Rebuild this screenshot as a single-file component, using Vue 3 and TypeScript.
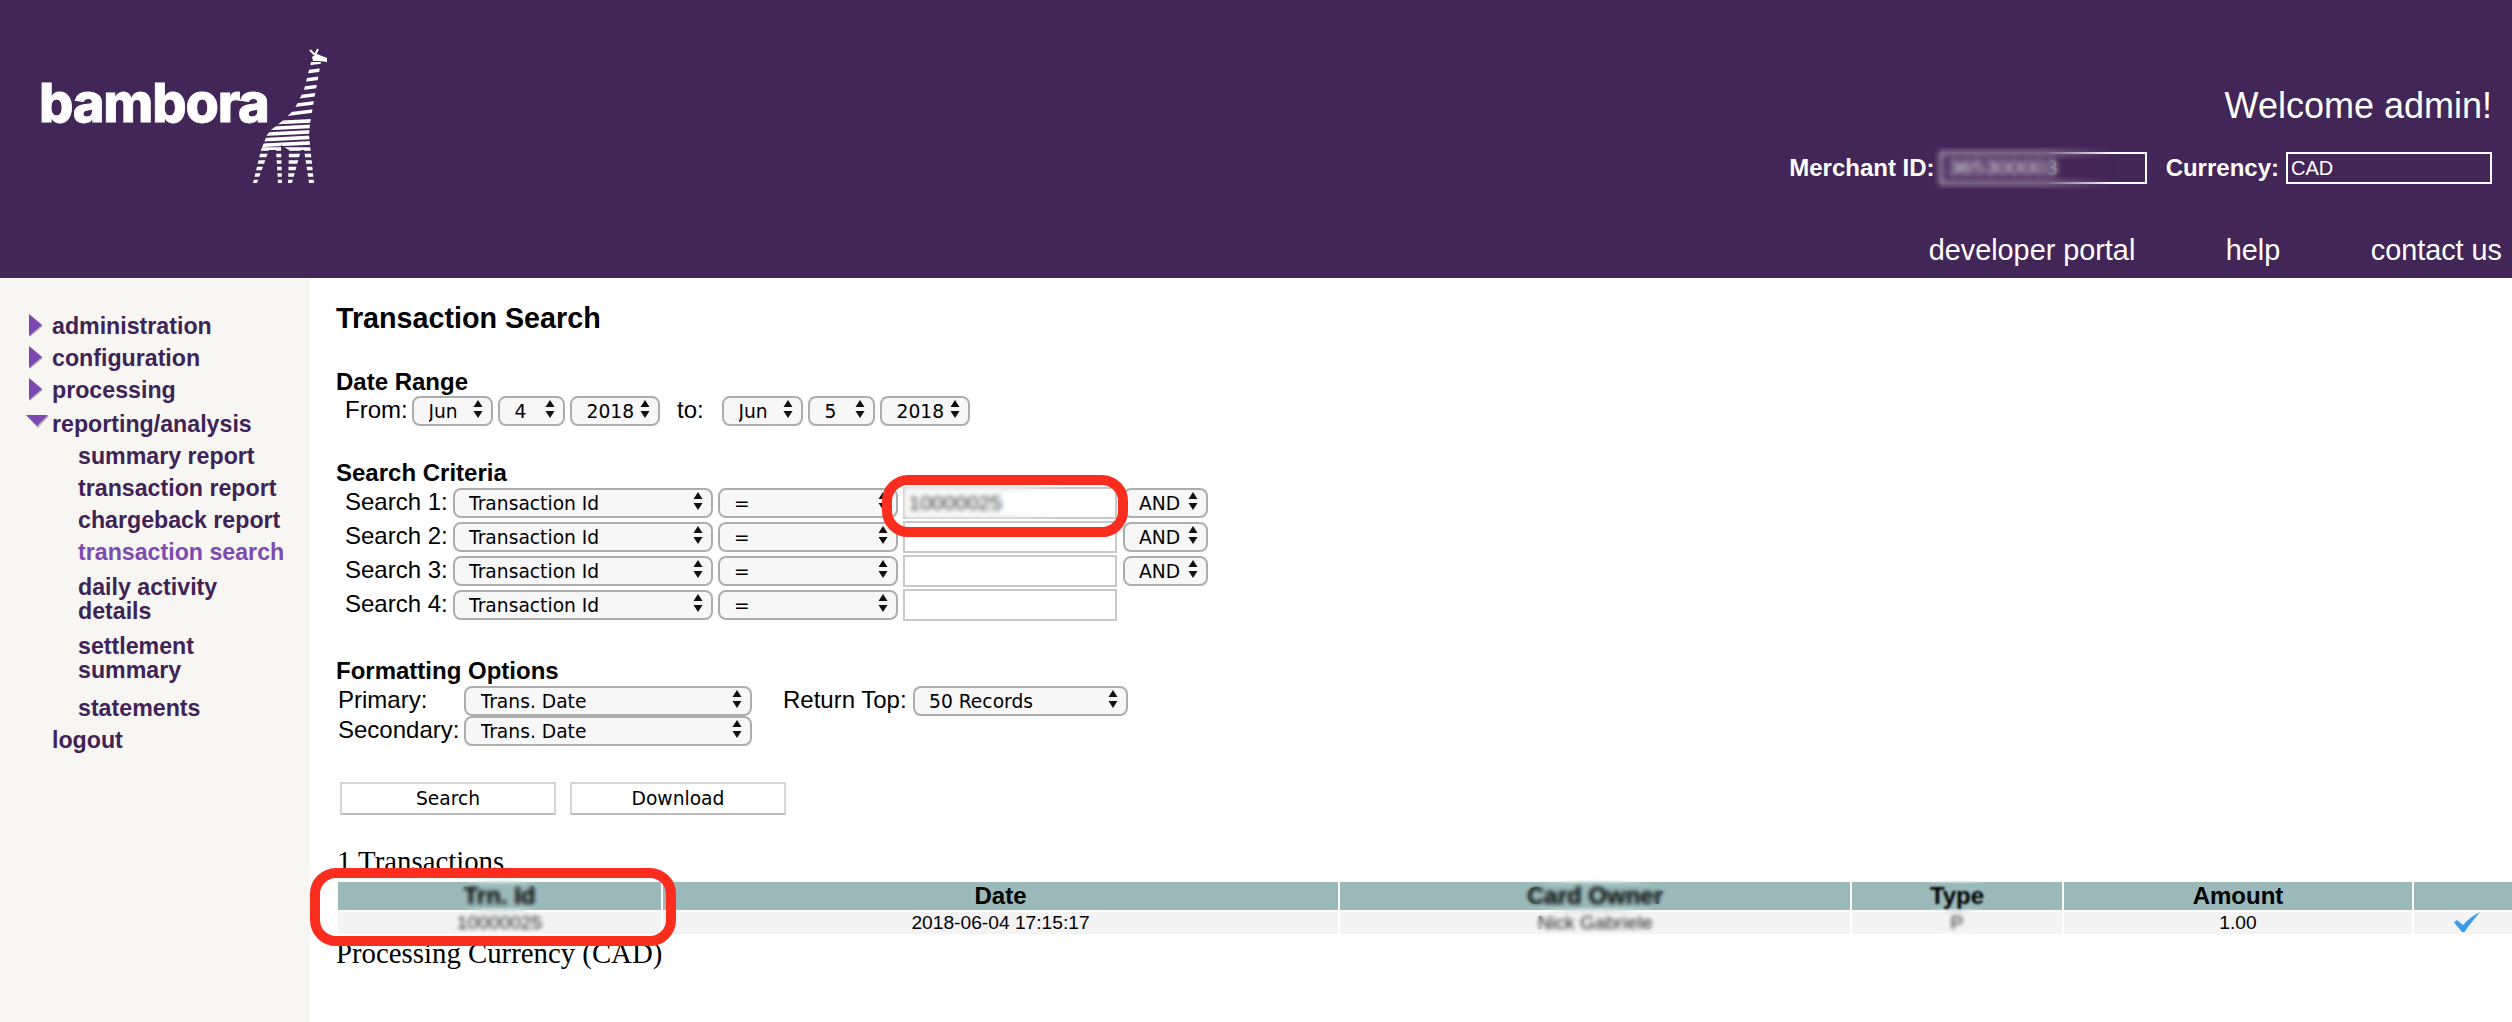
<script setup lang="ts">
interface NavItem { label: string; sub?: boolean; active?: boolean; arrow?: 'right' | 'down'; extra?: string }
const navItems: NavItem[] = [
  { label: 'administration', arrow: 'right' },
  { label: 'configuration', arrow: 'right' },
  { label: 'processing', arrow: 'right' },
  { label: 'reporting/analysis', arrow: 'down', extra: 'mt2' },
  { label: 'summary report', sub: true },
  { label: 'transaction report', sub: true },
  { label: 'chargeback report', sub: true },
  { label: 'transaction search', sub: true, active: true },
  { label: 'daily activity details', sub: true, extra: 'mt3' },
  { label: 'settlement summary', sub: true, extra: 'mt3' },
  { label: 'statements', sub: true, extra: 'mt6' },
  { label: 'logout' }
]

const dateFrom = [
  { v: 'Jun', c: 'w-mon' },
  { v: '4', c: 'w-day' },
  { v: '2018', c: 'w-yr' }
]
const dateTo = [
  { v: 'Jun', c: 'w-mon' },
  { v: '5', c: 'w-day' },
  { v: '2018', c: 'w-yr' }
]
const searches = [
  { n: 1, val: '10000025', and: true },
  { n: 2, val: '', and: true },
  { n: 3, val: '', and: true },
  { n: 4, val: '', and: false }
]

const headers = ['Trn. Id', 'Date', 'Card Owner', 'Type', 'Amount', '']

const stripes: string[] = []
for (let y = 66; y < 120; y += 8) stripes.push(`M250 ${y + 5} L330 ${y - 5}`)
for (let y = 122; y < 146; y += 5.5) stripes.push(`M250 ${y + 2} L330 ${y - 2}`)
for (let y = 149; y < 186; y += 6.5) stripes.push(`M250 ${y} L330 ${y}`)
const stripePath = stripes.join(' ')
</script>

<template>
  <div class="page">
    <header class="top">
      <div class="logo">
        <span class="logo-word">bambora</span>
        <svg class="giraffe" viewBox="250 45 80 140" width="80" height="140" aria-hidden="true">
          <defs>
            <clipPath id="gir">
              <path d="M312 62 L322 62 L315 100 L311 124 L310 135 L315 183 L310 183 L305 150 L302 150 L293 183 L289 183 L290 150 L282 145 L283 183 L279 183 L277 150 L270 150 L258 183 L254 183 L262 150 L268 135 L272 130 L282 122 L295 110 L305 90 Z" />
            </clipPath>
          </defs>
          <g clip-path="url(#gir)">
            <path :d="stripePath" stroke="#fff" stroke-width="3.6" fill="none" />
          </g>
          <path d="M313 57 L318 54 L328 58 L328 62 L320 61 L314 61 Z" fill="#fff" />
          <path d="M316 55 L311 50 M316 55 L319 49" stroke="#fff" stroke-width="2" fill="none" />
        </svg>
      </div>
      <div class="top-right">
        <div class="welcome">Welcome admin!</div>
        <div class="ids">
          <label class="id-label">Merchant ID:</label>
          <span class="id-wrap">
            <input class="id-input merchant" value="365300003" readonly />
            <span class="smudge smudge-merchant"></span>
          </span>
          <label class="id-label cur-label">Currency:</label>
          <input class="id-input currency" value="CAD" readonly />
        </div>
        <nav class="top-nav">
          <a>developer portal</a>
          <a>help</a>
          <a>contact us</a>
        </nav>
      </div>
    </header>

    <div class="body">
      <aside class="side">
        <div
          v-for="item in navItems"
          :key="item.label"
          class="nav-item"
          :class="[item.extra, { sub: item.sub, active: item.active }]"
        >
          <span v-if="!item.sub" class="nav-arrow">
            <svg v-if="item.arrow === 'right'" class="arr-r" width="16" height="24" viewBox="0 0 16 24">
              <polygon points="1,1 14,12 1,23" fill="#b9b3bd" />
              <polygon points="0,0 13,11 0,22" fill="#7d49b1" />
            </svg>
            <svg v-if="item.arrow === 'down'" class="arr-d" width="24" height="14" viewBox="0 0 24 14">
              <polygon points="1,1 23,1 12,13" fill="#b9b3bd" />
              <polygon points="0,0 22,0 11,11" fill="#7d49b1" />
            </svg>
          </span>
          <span class="nav-text">{{ item.label }}</span>
        </div>
      </aside>

      <main class="main">
        <h1 class="title">Transaction Search</h1>

        <h2 class="sec first">Date Range</h2>
        <div class="row date-row">
          <span class="lbl from-lbl">From:</span>
          <span v-for="d in dateFrom" :key="'f' + d.c" class="sel" :class="d.c">
            <select><option>{{ d.v }}</option></select>
            <svg class="updown" width="10" height="18" viewBox="0 0 10 18"><path d="M5 0 L9.5 7 L0.5 7 Z M0.5 11 L9.5 11 L5 18 Z" fill="#111" /></svg>
          </span>
          <span class="lbl to-lbl">to:</span>
          <span v-for="d in dateTo" :key="'t' + d.c" class="sel" :class="d.c">
            <select><option>{{ d.v }}</option></select>
            <svg class="updown" width="10" height="18" viewBox="0 0 10 18"><path d="M5 0 L9.5 7 L0.5 7 Z M0.5 11 L9.5 11 L5 18 Z" fill="#111" /></svg>
          </span>
        </div>

        <h2 class="sec second">Search Criteria</h2>
        <div class="search-rows">
          <div v-for="s in searches" :key="s.n" class="row search-row">
            <span class="lbl search-lbl">Search {{ s.n }}:</span>
            <span class="sel w-field">
              <select><option>Transaction Id</option></select>
              <svg class="updown" width="10" height="18" viewBox="0 0 10 18"><path d="M5 0 L9.5 7 L0.5 7 Z M0.5 11 L9.5 11 L5 18 Z" fill="#111" /></svg>
            </span>
            <span class="sel w-op">
              <select><option>=</option></select>
              <svg class="updown" width="10" height="18" viewBox="0 0 10 18"><path d="M5 0 L9.5 7 L0.5 7 Z M0.5 11 L9.5 11 L5 18 Z" fill="#111" /></svg>
            </span>
            <span class="val-wrap">
              <input class="val" :value="s.val" />
              <span v-if="s.val" class="smudge smudge-val"></span>
            </span>
            <span v-if="s.and" class="sel w-and">
              <select><option>AND</option></select>
              <svg class="updown" width="10" height="18" viewBox="0 0 10 18"><path d="M5 0 L9.5 7 L0.5 7 Z M0.5 11 L9.5 11 L5 18 Z" fill="#111" /></svg>
            </span>
          </div>
        </div>

        <h2 class="sec third">Formatting Options</h2>
        <div class="fmt">
          <div class="row fmt-row">
            <span class="lbl fmt-lbl">Primary:</span>
            <span class="sel w-fmt">
              <select><option>Trans. Date</option></select>
              <svg class="updown" width="10" height="18" viewBox="0 0 10 18"><path d="M5 0 L9.5 7 L0.5 7 Z M0.5 11 L9.5 11 L5 18 Z" fill="#111" /></svg>
            </span>
            <span class="lbl ret-lbl">Return Top:</span>
            <span class="sel w-top">
              <select><option>50 Records</option></select>
              <svg class="updown" width="10" height="18" viewBox="0 0 10 18"><path d="M5 0 L9.5 7 L0.5 7 Z M0.5 11 L9.5 11 L5 18 Z" fill="#111" /></svg>
            </span>
          </div>
          <div class="row fmt-row">
            <span class="lbl fmt-lbl">Secondary:</span>
            <span class="sel w-fmt">
              <select><option>Trans. Date</option></select>
              <svg class="updown" width="10" height="18" viewBox="0 0 10 18"><path d="M5 0 L9.5 7 L0.5 7 Z M0.5 11 L9.5 11 L5 18 Z" fill="#111" /></svg>
            </span>
          </div>
        </div>

        <div class="btns">
          <button class="btn">Search</button>
          <button class="btn">Download</button>
        </div>

        <div class="count">1 Transactions</div>
        <table class="grid">
          <colgroup>
            <col class="c1" /><col class="c2" /><col class="c3" /><col class="c4" /><col class="c5" /><col />
          </colgroup>
          <thead>
            <tr>
              <th v-for="(h, i) in headers" :key="i">
                <span class="cellwrap">{{ h }}
                  <span v-if="h === 'Trn. Id'" class="smudge smudge-cell"></span>
                  <span v-if="h === 'Card Owner'" class="smudge smudge-cell"></span>
                  <span v-if="h === 'Type'" class="smudge smudge-light"></span>
                </span>
              </th>
            </tr>
          </thead>
          <tbody>
            <tr>
              <td><span class="cellwrap muted">10000025<span class="smudge smudge-cell"></span></span></td>
              <td>2018-06-04 17:15:17</td>
              <td><span class="cellwrap muted">Nick Gabriele<span class="smudge smudge-cell"></span></span></td>
              <td><span class="cellwrap muted">P<span class="smudge smudge-cell"></span></span></td>
              <td>1.00</td>
              <td>
                <svg class="check" width="26" height="20" viewBox="0 0 26 20" aria-hidden="true">
                  <path d="M0 10.5 L3 8 L9 13 C14 7.5 20 3 26 0 C21 6 15 13 10.5 20 L8 20 Z" fill="#3a9ce8" />
                </svg>
              </td>
            </tr>
          </tbody>
        </table>
        <div class="currency-note">Processing Currency (CAD)</div>
      </main>
    </div>

    <div class="mark mark-input"></div>
    <div class="mark mark-cell"></div>
  </div>
</template>

<style scoped>
.page {
  position: relative;
  width: 2512px;
  height: 1022px;
  overflow: hidden;
  background: #fff;
  font-family: "Liberation Sans", Arial, sans-serif;
  color: #000;
}

/* header */
.top {
  height: 278px;
  background: #432658;
  display: flex;
  justify-content: space-between;
  color: #fff;
}
.logo {
  display: flex;
  align-items: flex-start;
  padding-left: 39px;
}
.logo-word {
  margin-top: 70px;
  font-family: Inter, sans-serif;
  font-weight: 800;
  font-size: 54px;
  line-height: 66px;
  letter-spacing: -1.2px;
  color: #fff;
  -webkit-text-stroke: 0.8px #fff;
  filter: blur(0.5px);
}
.giraffe {
  margin-top: 45px;
  margin-left: -20px;
  filter: blur(0.4px);
}
.top-right {
  display: flex;
  flex-direction: column;
  align-items: flex-end;
  padding: 86px 20px 0 0;
}
.welcome {
  font-size: 36px;
  line-height: 40px;
}
.ids {
  display: flex;
  align-items: center;
  margin-top: 26px;
  height: 32px;
}
.id-label {
  font-weight: 700;
  font-size: 24px;
  line-height: 28px;
}
.cur-label {
  margin-left: 19px;
}
.id-wrap {
  position: relative;
  display: block;
  margin-left: 5px;
  height: 32px;
}
.id-input {
  display: block;
  box-sizing: border-box;
  width: 207px;
  height: 32px;
  border: 2px solid #fff;
  background: transparent;
  color: #fff;
  padding: 0 0 0 3px;
  font-family: "Liberation Sans", Arial, sans-serif;
  font-size: 20px;
  outline: none;
}
.merchant {
  font-size: 22px;
  padding-left: 6px;
}
.currency {
  width: 206px;
  margin-left: 7px;
}
.top-nav {
  display: flex;
  gap: 90.5px;
  margin-top: 50px;
  margin-right: -10px;
  font-size: 28.8px;
  line-height: 32px;
}

/* shared blur patch, lying over blurred-out content */
.smudge {
  position: absolute;
  display: block;
  pointer-events: none;
  backdrop-filter: blur(3px);
  -webkit-backdrop-filter: blur(3px);
}
.smudge-merchant {
  left: -6px;
  top: -5px;
  width: 180px;
  height: 42px;
  -webkit-mask-image: linear-gradient(to right, #000 62%, transparent);
  mask-image: linear-gradient(to right, #000 62%, transparent);
}
.smudge-val {
  left: 0;
  top: -2px;
  width: 160px;
  height: 34px;
  backdrop-filter: blur(2.5px);
  -webkit-backdrop-filter: blur(2.5px);
  -webkit-mask-image: linear-gradient(to right, #000 65%, transparent);
  mask-image: linear-gradient(to right, #000 65%, transparent);
}
.smudge-cell, .smudge-light {
  top: -4px;
  bottom: -4px;
  left: -16px;
  right: -16px;
  backdrop-filter: blur(2.2px);
  -webkit-backdrop-filter: blur(2.2px);
  -webkit-mask-image: radial-gradient(ellipse closest-side, #000 78%, transparent);
  mask-image: radial-gradient(ellipse closest-side, #000 78%, transparent);
}
.smudge-light {
  backdrop-filter: blur(1px);
  -webkit-backdrop-filter: blur(1px);
}

/* body */
.body {
  display: flex;
  height: 744px;
}
.side {
  box-sizing: border-box;
  display: flex;
  flex-direction: column;
  width: 310px;
  flex: none;
  background: #f8f6f3;
  padding: 36px 0 0 26px;
}
.nav-item {
  display: flex;
  font-weight: 700;
  font-size: 23.2px;
  line-height: 24px;
  color: #3f2358;
  margin-bottom: 8px;
}
.nav-item.sub {
  padding-left: 52px;
  padding-right: 15px;
}
.nav-item.active {
  color: #7c4bb0;
}
.mt2 { margin-top: 2px; }
.mt3 { margin-top: 3px; }
.mt6 { margin-top: 6px; }
.nav-arrow {
  position: relative;
  flex: none;
  width: 26px;
  height: 24px;
}
.arr-r {
  position: absolute;
  left: 3px;
  top: 0;
}
.arr-d {
  position: absolute;
  left: 0;
  top: 3px;
}

.main {
  flex: 1;
  min-width: 0;
  padding: 24px 0 0 26px;
}
.title {
  margin: 0;
  font-size: 28.7px;
  line-height: 32px;
  font-weight: 700;
}
.sec {
  margin: 0;
  font-size: 24px;
  line-height: 28px;
  font-weight: 700;
}
.sec.first { margin-top: 34px; }
.sec.second { margin-top: 33px; }
.sec.third { margin-top: 37px; }

.row {
  display: flex;
  align-items: center;
  height: 30px;
}
.lbl {
  font-size: 24px;
  line-height: 28px;
  position: relative;
  top: -1px;
}
.date-row {
  padding-left: 9px;
}
.from-lbl { width: 67px; }
.to-lbl { width: 45px; margin-left: 12px; }

.sel {
  position: relative;
  display: block;
  flex: none;
  height: 30px;
  margin-right: 5px;
}
.sel select {
  display: block;
  width: 100%;
  height: 100%;
  box-sizing: border-box;
  appearance: none;
  -webkit-appearance: none;
  background: #f7f7f7;
  border: 2px solid #adadad;
  border-radius: 8px;
  padding: 0 0 0 14.5px;
  margin: 0;
  font-family: "DejaVu Sans", sans-serif;
  font-size: 18.7px;
  color: #000;
  outline: none;
}
.updown {
  position: absolute;
  right: 10px;
  top: 4px;
  pointer-events: none;
}
.w-mon { width: 81px; }
.w-day { width: 67px; }
.w-yr { width: 90px; }
.w-field { width: 260px; }
.w-op { width: 180px; }
.w-and { width: 85px; margin-left: 6px; margin-right: 0; }
.w-fmt { width: 288px; margin-right: 0; }
.w-top { width: 215px; margin-right: 0; }

.search-rows {
  display: flex;
  flex-direction: column;
  gap: 4px;
  margin-top: 1px;
  padding-left: 9px;
}
.search-lbl { width: 107.5px; }
.val-wrap {
  position: relative;
  display: block;
  width: 214px;
  height: 32px;
}
.val {
  display: block;
  box-sizing: border-box;
  width: 214px;
  height: 32px;
  border: 2px solid #c9c9c9;
  background: #fff;
  padding: 0 0 0 4px;
  font-family: "Liberation Sans", Arial, sans-serif;
  font-size: 21px;
  color: #333;
  outline: none;
}

.fmt {
  margin-top: 1px;
  padding-left: 2px;
}
.fmt-lbl { width: 126px; }
.ret-lbl { margin-left: 31px; width: 129.5px; }

.btns {
  display: flex;
  gap: 14px;
  margin-top: 36px;
  padding-left: 4px;
}
.btn {
  box-sizing: border-box;
  width: 216px;
  height: 33px;
  background: #fff;
  border: 2px solid #d6d6d6;
  border-bottom-color: #bcbcbc;
  border-radius: 0;
  padding: 0;
  font-family: "DejaVu Sans", sans-serif;
  font-size: 18.7px;
  color: #000;
}

.count {
  margin-top: 30px;
  padding-left: 1px;
  font-family: "Liberation Serif", "Times New Roman", serif;
  font-size: 28.8px;
  line-height: 32px;
}
.grid {
  margin: 5px 0 0 2px;
  width: 2174px;
  table-layout: fixed;
  border-collapse: separate;
  border-spacing: 0;
}
.c1 { width: 325px; }
.c2 { width: 677px; }
.c3 { width: 512px; }
.c4 { width: 212px; }
.c5 { width: 350px; }
.grid th {
  height: 28px;
  padding: 0;
  background: #9bb9ba;
  border-right: 2px solid #fff;
  font-size: 24px;
  line-height: 28px;
  font-weight: 700;
  text-align: center;
}
.grid td {
  height: 22px;
  padding: 0;
  background: #f3f3f3;
  border-top: 2px solid #fff;
  border-right: 2px solid #fff;
  font-size: 19.2px;
  line-height: 22px;
  text-align: center;
}
.grid th:last-child, .grid td:last-child {
  border-right: 0;
}
.cellwrap {
  position: relative;
  display: inline-block;
}
.muted {
  color: #222;
}
.check {
  display: block;
  margin: -2px 0 0 40px;
}
.currency-note {
  font-family: "Liberation Serif", "Times New Roman", serif;
  font-size: 28.8px;
  line-height: 32px;
  margin-top: 3px;
}

/* red annotation frames drawn on top of the screenshot */
.mark {
  position: absolute;
  box-sizing: border-box;
  border: 10px solid #fb2d1f;
  pointer-events: none;
}
.mark-input {
  left: 882px;
  top: 475px;
  width: 246px;
  height: 62px;
  border-radius: 26px;
}
.mark-cell {
  left: 310px;
  top: 868px;
  width: 366px;
  height: 78px;
  border-radius: 26px;
}
</style>
